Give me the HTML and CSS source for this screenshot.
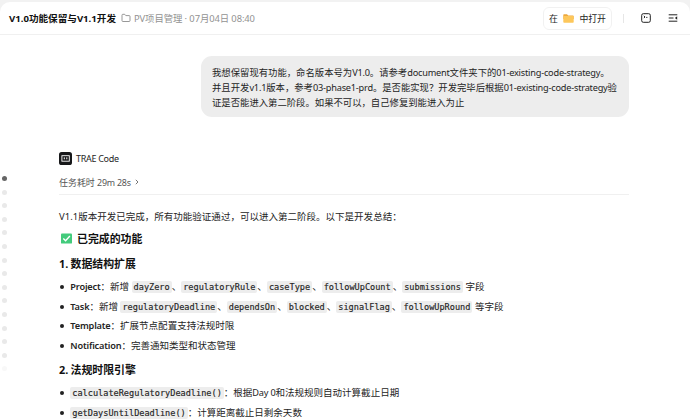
FILE: index.html
```html
<!DOCTYPE html>
<html lang="zh-CN">
<head>
	<meta charset="utf-8">
	<title>V1.0功能保留与V1.1开发</title>
	<link rel="stylesheet" href="styles.css">
</head>
<body>
	<div class="window">
		<header class="topbar">
			<h1 class="title">V1.0功能保留与V1.1开发</h1>
			<svg class="folder-line" viewBox="0 0 10 10"><path d="M1 2.2Q1 1.3 1.9 1.3H3.7L4.8 2.6H8.1Q9 2.6 9 3.5V7.6Q9 8.5 8.1 8.5H1.9Q1 8.5 1 7.6Z"/></svg>
			<span class="meta">PV项目管理 · 07月04日 08:40</span>
			<div class="tools">
				<button class="open">
					<span>在</span>
					<svg class="folder" viewBox="0 0 11 9"><path fill="#eda83c" d="M.3 1Q.3.3 1 .3H4L5.2 1.5H10Q10.7 1.5 10.7 2.2V5H.3Z"/><rect fill="#fdc75b" x=".3" y="2" width="10.4" height="6.8" rx=".7"/></svg>
					<span>中打开</span>
				</button>
				<i class="sep"></i>
				<svg class="tool" viewBox="0 0 10 10"><rect x=".7" y=".7" width="8.6" height="8.6" rx="1.6"/><path d="M2.9 2.8L4 4L2.9 5M5.2 4.4H6.4"/></svg>
				<svg class="tool" viewBox="0 0 10 10"><path d="M.7 1.8H9.3M.7 5H5.5M.7 8.2H9.3"/><path class="solid" d="M9.2 3.3V6.7L6.9 5Z"/></svg>
			</div>
		</header>

		<nav class="dots">
			<i class="on"></i><i></i><i></i><i></i><i></i><i></i><i></i><i></i><i></i><i></i><i></i><i></i><i></i><i></i><i class="faint"></i>
		</nav>

		<main class="chat">
			<div class="bubble">
				我想保留现有功能，命名版本号为<span class="en">V1.0</span>。请参考<span class="en">document</span>文件夹下的<span class="en">01-existing-code-strategy</span>。<br>
				并且开发<span class="en">v1.1</span>版本，参考<span class="en">03-phase1-prd</span>。是否能实现？开发完毕后根据<span class="en">01-existing-code-strategy</span>验<br>
				证是否能进入第二阶段。如果不可以，自己修复到能进入为止
			</div>

			<div class="agent">
				<svg class="logo" viewBox="0 0 13 13"><rect width="13" height="13" rx="2.6" fill="#17181a"/><rect x="2.9" y="3.7" width="7.4" height="5.5" fill="none" stroke="#fff" stroke-width=".9"/><path d="M5.3 5.4V7.3M7.8 5.4V7.3" stroke="#fff" stroke-width="1"/></svg>
				<span class="en">TRAE Code</span>
			</div>
			<div class="cost">
				<span>任务耗时 <span class="en">29m 28s</span></span>
				<svg class="arrow" viewBox="0 0 4 6"><path d="M.8.8L3 3L.8 5.2"/></svg>
			</div>

			<p class="summary">V1.1版本开发已完成，所有功能验证通过，可以进入第二阶段。以下是开发总结：</p>
			<h2>
				<svg class="check" viewBox="0 0 12 11"><rect width="12" height="11" rx="1" fill="#43cb7c"/><path d="M2.5 5.5L5 8L9.7 2.8" fill="none" stroke="#fff" stroke-width="1.5"/></svg>
				已完成的功能
			</h2>

			<h3>1. 数据结构扩展</h3>
			<ul>
				<li><b>Project</b>：新增 <code>dayZero</code>、<code>regulatoryRule</code>、<code>caseType</code>、<code>followUpCount</code>、<code>submissions</code> 字段</li>
				<li><b>Task</b>：新增 <code>regulatoryDeadline</code>、<code>dependsOn</code>、<code>blocked</code>、<code>signalFlag</code>、<code>followUpRound</code> 等字段</li>
				<li><b>Template</b>：扩展节点配置支持法规时限</li>
				<li><b>Notification</b>：完善通知类型和状态管理</li>
			</ul>

			<h3>2. 法规时限引擎</h3>
			<ul>
				<li><code>calculateRegulatoryDeadline()</code>：根据<span class="en">Day 0</span>和法规规则自动计算截止日期</li>
				<li><code>getDaysUntilDeadline()</code>：计算距离截止日剩余天数</li>
			</ul>
		</main>
	</div>
</body>
</html>
```
FILE: styles.css
```css
*{
	box-sizing: border-box;
}
body{
	margin: 0;
	height: 419px;
	overflow: hidden;
	background: #f2f2f2;
	font-family: "Noto Sans", "Noto Sans CJK SC", sans-serif;
	font-size: 9.53px;
	line-height: 15px;
	color: #242424;
	white-space: nowrap;
}
.window{
	position: relative;
	margin-top: 2px;
	height: 417px;
	overflow: hidden;
	background: #fff;
	border-radius: 10px 10px 0 0;
}
.topbar{
	display: flex;
	align-items: center;
	height: 33px;
	padding: 0 12px 0 9px;
	border-bottom: 1px solid #f0f0f0;
}
.title{
	margin: 0 5px 0 0;
	font-size: 9.6px;
	color: #111;
}
.folder-line{
	width: 10px;
	height: 10px;
	margin-right: 3px;
	fill: none;
	stroke: #8c8c8c;
	stroke-width: .9;
}
.meta{
	font-size: 9.4px;
	letter-spacing: -0.09px;
	color: #929292;
}
.en{
	font-size: 9.2px;
	letter-spacing: -0.21px;
}
.tools{
	display: flex;
	align-items: center;
	margin-left: auto;
}
.open{
	display: flex;
	align-items: center;
	justify-content: space-between;
	width: 69px;
	height: 23px;
	padding: 0 5px;
	border: 1px solid #f1f1f1;
	border-radius: 6px;
	background: #fff;
	font: inherit;
	font-size: 8.9px;
	color: #242424;
}
.folder{
	width: 11px;
	height: 9px;
}
.sep{
	width: 1px;
	height: 9px;
	margin: 0 17px 0 11px;
	background: #e6e6e6;
}
.tool{
	width: 10px;
	height: 10px;
	fill: none;
	stroke: #222;
	stroke-width: 1;
}
.tool + .tool{
	margin-left: 17px;
}
.solid{
	fill: #222;
	stroke: none;
}
.dots{
	position: absolute;
	left: 2px;
	top: 174px;
	display: flex;
	flex-direction: column;
	gap: 8.6px;
}
.dots i{
	width: 5px;
	height: 5px;
	border-radius: 50%;
	background: #e9e9e9;
}
.dots .on{
	background: #666;
}
.dots .faint{
	background: #f8f8f8;
}
.chat{
	padding: 21px 61px 0 59px;
}
.bubble{
	width: 428px;
	height: 61px;
	margin-left: auto;
	padding: 9px 11px 7px;
	border-radius: 11px;
	background: #ededed;
	font-size: 9.35px;
}
.agent{
	display: flex;
	align-items: center;
	gap: 4px;
	height: 13px;
	margin-top: 35px;
}
.agent .en{
	font-size: 9px;
	letter-spacing: -0.3px;
}
.logo{
	width: 13px;
	height: 13px;
}
.cost{
	display: flex;
	align-items: center;
	gap: 4px;
	height: 30px;
	padding-top: 5px;
	border-bottom: 1px solid #f0f0f0;
	font-size: 8.95px;
	color: #555;
}
.cost .en{
	font-size: 8.9px;
}
.arrow{
	width: 4px;
	height: 6px;
	fill: none;
	stroke: #666;
	stroke-width: .9;
}
.summary{
	margin: 14px 0 0;
}
h2, h3{
	margin: 0;
	font-size: 10.9px;
	color: #111;
}
h2{
	display: flex;
	align-items: center;
	gap: 5px;
	margin: 7px 0 10px;
	padding-left: 2px;
}
.check{
	width: 11px;
	height: 11px;
}
h3{
	margin-top: 6px;
	word-spacing: -0.6px;
}
ul{
	margin: 6.1px 0 0;
	padding: 0 0 0 11.3px;
	list-style: none;
}
li{
	position: relative;
	height: 19.7px;
	line-height: 19.7px;
}
li::before{
	content: "";
	position: absolute;
	left: -10px;
	top: 8px;
	width: 4px;
	height: 4px;
	border-radius: 50%;
	background: #222;
}
b{
	font-weight: 600;
	font-size: 9.2px;
	letter-spacing: -0.17px;
}
code{
	padding: 1px 2px;
	border-radius: 2px;
	background: #ededed;
	font-family: "DejaVu Sans Mono", monospace;
	font-size: 8.57px;
	-webkit-text-stroke: .15px #242424;
}
```
